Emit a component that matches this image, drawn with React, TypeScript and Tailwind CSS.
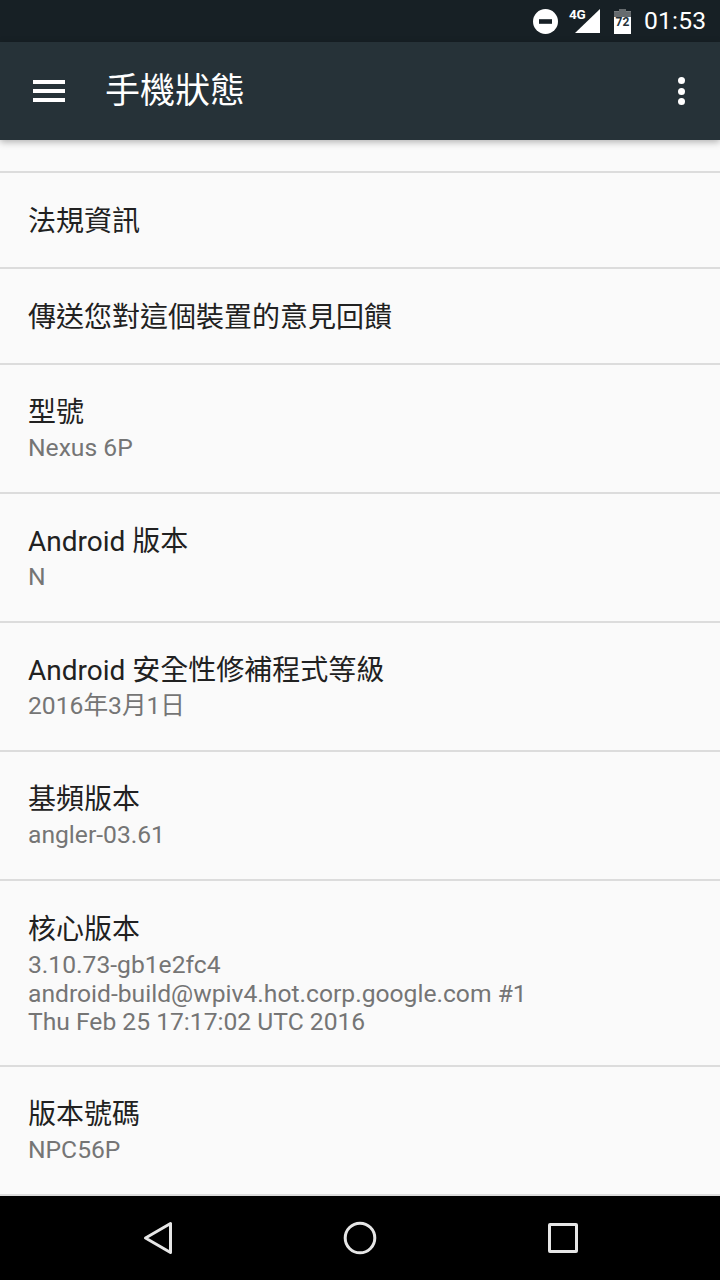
const FONT = "font-['Roboto','Noto_Sans_CJK_TC',sans-serif]"

const ROWS = [
  { title: '法規資訊', height: 'h-[96px]', pad: 'pt-[30.5px]' },
  { title: '傳送您對這個裝置的意見回饋', height: 'h-[96px]', pad: 'pt-[31px]' },
  { title: '型號', lines: ['Nexus 6P'], height: 'h-[129px]', pad: 'pt-[30px]' },
  { title: 'Android 版本', lines: ['N'], height: 'h-[129px]', pad: 'pt-[30px]' },
  { title: 'Android 安全性修補程式等級', lines: ['2016年3月1日'], height: 'h-[129px]', pad: 'pt-[30px]' },
  { title: '基頻版本', lines: ['angler-03.61'], height: 'h-[129px]', pad: 'pt-[30px]' },
  { title: '核心版本', lines: ['3.10.73-gb1e2fc4', 'android-build@wpiv4.hot.corp.google.com #1', 'Thu Feb 25 17:17:02 UTC 2016'], height: 'h-[186px]', pad: 'pt-[31px]' },
  { title: '版本號碼', lines: ['NPC56P'], height: 'h-[129px]', pad: 'pt-[30px]' },
]

function StatusBar() {
  return (
    <div className="h-[42px] bg-[#172025] flex items-center justify-end pr-[15px] text-white">
      <svg width="25" height="25" viewBox="0 0 25 25" className="mr-[17px]">
        <circle cx="12.5" cy="12.5" r="12.5" fill="#fff" />
        <rect x="6" y="10.2" width="13" height="4.6" fill="#172025" />
      </svg>
      <div className="relative w-[25px] h-[24px] mr-[14px]">
        <svg width="25" height="24" viewBox="0 0 25 24" className="absolute inset-0">
          <path d="M0 24 L25 0 V24 Z" fill="#fff" />
        </svg>
        <span className="absolute left-[-6px] top-[-2px] text-[13.5px] leading-[14px] font-bold font-['Roboto',sans-serif] tracking-[-0.3px]">4G</span>
      </div>
      <div className="relative w-[17px] h-[25px] mr-[13px]">
        <svg width="17" height="25" viewBox="0 0 17 25" className="absolute inset-0">
          <path d="M5 0 H12 V2.5 H17 V25 H0 V2.5 H5 Z" fill="#fff" />
          <path d="M5 0 H12 V2.5 H17 V8 H0 V2.5 H5 Z" fill="#666b6e" />
        </svg>
        <span className="absolute inset-x-0 top-[7.5px] text-center text-[12px] leading-[12px] font-bold text-[#263238] font-['Roboto',sans-serif]">72</span>
      </div>
      <span className="w-[61px] text-right text-[24.65px] leading-none font-['Roboto',sans-serif] tracking-[0.2px]">01:53</span>
    </div>
  )
}

function Toolbar() {
  return (
    <div className="relative z-10 h-[98px] bg-[#263238] flex items-center shadow-[0_2px_7px_rgba(0,0,0,0.3)]">
      <div className="ml-[33px] w-[32px] flex flex-col gap-[5px]">
        <div className="h-[4px] bg-white" />
        <div className="h-[4px] bg-white" />
        <div className="h-[4px] bg-white" />
      </div>
      <h1 className={`ml-[40px] flex-1 text-[35px] leading-none text-white ${FONT}`}>手機狀態</h1>
      <div className="mr-[35px] flex flex-col gap-[3.4px]">
        <div className="w-[7px] h-[7px] rounded-full bg-white" />
        <div className="w-[7px] h-[7px] rounded-full bg-white" />
        <div className="w-[7px] h-[7px] rounded-full bg-white" />
      </div>
    </div>
  )
}

function NavBar() {
  return (
    <div className="h-[84px] bg-black flex items-center justify-center">
      <div className="w-[202px] flex justify-center">
        <svg width="30" height="34" viewBox="0 0 30 34" fill="none" stroke="#e6e6e6" strokeWidth="3" strokeLinejoin="round">
          <path d="M2.5 17 L27.5 2.5 V31.5 Z" />
        </svg>
      </div>
      <div className="w-[202px] flex justify-center">
        <svg width="34" height="34" viewBox="0 0 34 34" fill="none" stroke="#e6e6e6" strokeWidth="3">
          <circle cx="17" cy="17" r="14.8" />
        </svg>
      </div>
      <div className="w-[202px] flex justify-center pl-[1px]">
        <svg width="30" height="30" viewBox="0 0 30 30" fill="none" stroke="#e6e6e6" strokeWidth="3" strokeLinejoin="round">
          <rect x="1.5" y="1.5" width="27" height="27" rx="0.5" />
        </svg>
      </div>
    </div>
  )
}

export default function App() {
  return (
    <div className={`w-[720px] h-[1280px] flex flex-col overflow-hidden bg-[#fafafa] ${FONT}`}>
      <StatusBar />
      <Toolbar />
      <div className="flex-1 flex flex-col">
        <div className="h-[33px] border-b-2 border-[#dcdcdc]" />
        {ROWS.map(row => (
          <div key={row.title} className={`${row.height} ${row.pad} flex flex-col px-[28px] border-b-2 border-[#dcdcdc]`}>
            <div className="text-[28px] leading-[36px] text-[#212121]">{row.title}</div>
            {row.lines && (
              <div className="mt-[3px]">
                {row.lines.map(line => (
                  <div key={line} className="text-[24.65px] leading-[28.5px] text-[#757575]">{line}</div>
                ))}
              </div>
            )}
          </div>
        ))}
      </div>
      <NavBar />
    </div>
  )
}
